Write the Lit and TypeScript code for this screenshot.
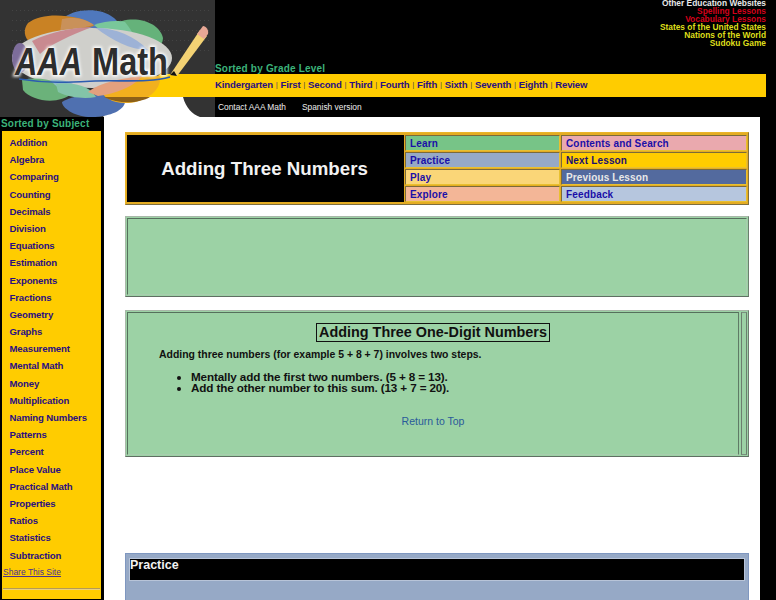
import { LitElement, html, css, svg } from "lit";
import { customElement } from "lit/decorators.js";

const subjects = ["Addition","Algebra","Comparing","Counting","Decimals","Division","Equations","Estimation","Exponents","Fractions","Geometry","Graphs","Measurement","Mental Math","Money","Multiplication","Naming Numbers","Patterns","Percent","Place Value","Practical Math","Properties","Ratios","Statistics","Subtraction"];
const grades = ["Kindergarten","First","Second","Third","Fourth","Fifth","Sixth","Seventh","Eighth","Review"];

const logo = svg`
<svg class="logo" width="215" height="117" viewBox="0 0 215 117" xmlns="http://www.w3.org/2000/svg">
  <defs>
    <filter id="b1" x="-20%" y="-30%" width="140%" height="160%"><feGaussianBlur stdDeviation="1.6"/></filter>
    <pattern id="dots" width="4" height="10" patternUnits="userSpaceOnUse"><rect width="1" height="1" fill="#444"/></pattern>
  </defs>
  <rect width="215" height="117" fill="#333"/>
  <rect x="12" y="8" width="200" height="50" fill="url(#dots)"/>
  <path d="M103 117 C112 106 125 98 145 97 L183 97 C186 108 192 114 200 117 Z" fill="#fff"/>
  <path d="M160 74 H215 V97 H135 Z" fill="#fc0"/>
  <path d="M62 19 C72 9 100 6 114 18 C122 24 122 40 100 46 C80 48 62 36 62 19 Z" fill="#4f78bd"/>
  <path d="M122 21 C140 16 160 24 163 38 C163 52 140 56 118 48 C105 38 108 26 122 21 Z" fill="#65b27a"/>
  <path d="M28 23 C40 14 60 14 78 18 C88 21 93 24 94 26 C75 30 50 36 30 42 C24 38 23 29 28 23 Z" fill="#c98224"/>
  <path d="M62 19 C70 17 84 17 94 25 L60 33 Z" fill="#c9915a"/>
  <path d="M94 25 C104 21 118 20 125 22 C130 28 132 32 134 36 L100 30 Z" fill="#79c79a"/>
  <ellipse cx="92" cy="58" rx="80" ry="30" fill="#cfcfcb"/>
  <path d="M32 41 C50 32 70 28 92 27 C70 36 50 44 40 54 Z" fill="#c98a90"/>
  <path d="M96 28 C115 28 135 36 148 50 C130 50 112 40 96 28 Z" fill="#9db2d6"/>
  <ellipse cx="20" cy="58" rx="8" ry="15" fill="#7d6d9a"/>
  <path d="M22 80 C40 76 60 80 72 93 C60 105 32 102 23 90 Z" fill="#6bb27a"/>
  <path d="M50 80 C70 78 86 90 94 99 C80 98 62 94 50 80 Z" fill="#8fb8c9"/>
  <path d="M62 102 C78 92 110 92 125 102 C124 112 104 118 88 117 C74 116 62 108 62 102 Z" fill="#4f70b0"/>
  <path d="M56 84 C80 82 90 88 96 97 C85 99 70 98 58 92 Z" fill="#83c4a8"/>
  <path d="M100 90 C116 80 140 76 160 76 C162 90 146 102 128 103 C114 104 104 98 100 90 Z" fill="#f2b01e"/>
  <path d="M88 92 C100 82 125 78 142 76 C135 86 115 94 98 96 Z" fill="#e3a07e"/>
  <path d="M104 97 H150 C140 103 120 105 104 97 Z" fill="#8c6018"/>
  <path d="M170 75 L200 30 L207 36 L177 76 Z" fill="#f3d274"/>
  <path d="M197 34 L203 26 C206 26 209 30 208 34 L204 39 Z" fill="#e8a795"/>
  <path d="M170 75 L174 71 L177 76 Z" fill="#111"/>
  <g font-family="'Liberation Sans', Arial, sans-serif" font-weight="700" font-size="39">
    <text x="15" y="75" fill="#fff" stroke="#fff" stroke-width="3" filter="url(#b1)" font-style="italic" textLength="67" lengthAdjust="spacingAndGlyphs">AAA</text>
    <text x="92" y="75" fill="#fff" stroke="#fff" stroke-width="3" filter="url(#b1)" textLength="76" lengthAdjust="spacingAndGlyphs">Math</text>
    <text x="15" y="75" fill="#2d2d2d" font-style="italic" textLength="67" lengthAdjust="spacingAndGlyphs">AAA</text>
    <text x="92" y="75" fill="#2d2d2d" textLength="76" lengthAdjust="spacingAndGlyphs">Math</text>
  </g>
  <path d="M19 79 C50 84 75 82 95 81 C120 80 150 83 170 77" fill="none" stroke="#2b5cb0" stroke-width="1.6"/>
</svg>`;

@customElement("app-root")
export class AppRoot extends LitElement {
  static styles = css`
    :host { display: block; background: #000; width: 776px; height: 600px; overflow: hidden;
      font-family: "Liberation Sans", Arial, sans-serif; }
    a { text-decoration: none; color: inherit; }
    .header { display: flex; height: 117px; }
    .logo { display: block; flex: none; }
    .head-right { width: 551px; display: flex; flex-direction: column; }
    .others { height: 61px; box-sizing: border-box; text-align: right; font-size: 8.4px; font-weight: 700; line-height: 8px; color: #c8c800; }
    .others .w { color: #e8e8e8; line-height: 7px; } .others .r { color: #d4001a; } .others .y { color: #dede1a; }
    .grade-label { height: 13px; line-height: 15px; font-size: 10px; font-weight: 700; color: #3cb37a; letter-spacing: .2px; }
    .grade-bar { height: 23px; box-sizing: border-box; padding-bottom: 3px; background: #fc0; display: flex; align-items: center; font-size: 9.6px; letter-spacing: -.15px; font-weight: 700; color: #2a0f80; white-space: nowrap; }
    .grade-bar i { font-style: normal; font-weight: 400; color: #5a4a50; padding: 0 2.8px; font-size: 8px; }
    .contact { display: flex; gap: 16px; padding: 5px 0 0 3px; font-size: 8.4px; color: #eee; }
    .body { display: flex; height: 483px; }
    .side { width: 104px; flex: none; }
    .side-label { height: 13px; line-height: 13px; padding-left: 1px; font-size: 10px; font-weight: 700; color: #3cb37a; letter-spacing: .2px; white-space: nowrap; }
    .side-box { margin-left: 1px; width: 101px; height: 470px; background: #fc0; border: 1px solid #000; box-sizing: border-box; padding-top: 3px; }
    .side-box a.s { display: block; height: 17.2px; line-height: 17.2px; padding-left: 7.5px; font-size: 9.6px; letter-spacing: -.15px; font-weight: 700; color: #2a0f80; }
    .share { display: block; margin: 3px 0 0 1px; font-size: 8.5px; color: #4a2f90; text-decoration: underline; }
    .side-box hr { margin: 11px 0 0 1px; width: 97px; border: 0; border-top: 1px solid #b59a55; border-bottom: 1px solid #eed27a; }
    .main { width: 656px; background: #fff; padding: 15px 0 0 21px; box-sizing: border-box; }
    .title-table { width: 624px; height: 73px; box-sizing: border-box; background: #e4ac22; border: 1px solid; border-color: #e9b42a #7f6f3f #7f6f3f #e9b42a; padding: 2px 1px; display: grid; grid-template-columns: 277px 155px 186px; gap: 1px 1px; grid-template-rows: repeat(4, 1fr); }
    .title-cell { grid-row: 1 / span 4; background: #000; color: #f2f2f2; font-size: 18.7px; font-weight: 700; display: flex; align-items: center; justify-content: center; padding: 0 2px 0 0; box-sizing: border-box; }
    .nav { border: 1px solid; border-color: #7a6a3a #e8c030 #e8c030 #7a6a3a; font-size: 10px; font-weight: 700; color: #1a0fa8; padding: 0 0 0 4px; display: flex; align-items: center; letter-spacing: .15px; }
    .learn { background: #77c487; } .practice { background: #96a9c6; } .play { background: #fad678; } .explore { background: #f3b697; }
    .contents { background: #eaa9ae; } .next { background: #fc0; color: #1a0f70; } .prev { background: #536a9e; color: #e8e8e8; } .feedback { background: #b6c6de; }
    .green { width: 624px; box-sizing: border-box; background: #9cd2a5; border: 1px solid; border-color: #a8b8a8 #6b7f6e #5f6f62 #a8b8a8; padding: 1px; }
    .ad { height: 81px; margin-top: 11px; }
    .ad > div { height: 100%; box-sizing: border-box; border: 1px solid; border-color: #56705c #a8cdae #a8cdae #56705c; }
    .lesson { height: 147px; margin-top: 13px; display: flex; }
    .lesson-main { width: 612px; flex: none; box-sizing: border-box; border: 1px solid; border-color: #56705c #5f7a66 #a8cdae #56705c; text-align: center; padding-top: 10px; color: #111; }
    .lesson-side { flex: 1; margin-left: 2px; border: 1px solid; border-color: #7a8f7e #6b7f6e; }
    .lesson-title { display: inline-block; border: 1px solid #111; font-size: 14.4px; font-weight: 700; line-height: 17px; padding: 0 2px; }
    .lesson p { margin: 6px 0 0 31px; text-align: left; font-size: 10.45px; font-weight: 700; line-height: 13px; }
    .lesson ul { margin: 10px 0 0 31px; padding: 0 0 0 32px; text-align: left; font-size: 11.7px; letter-spacing: -.13px; font-weight: 700; line-height: 11px; }
    .top { display: block; margin-top: 22px; font-size: 10.5px; color: #2a5a9a; }
    .practice-box { width: 624px; height: 60px; margin-top: 96px; box-sizing: border-box; background: #96a9c6; border: 1px solid #7f97c0; padding: 4px 3px; }
    .practice-title { height: 23px; box-sizing: border-box; background: #000; color: #f2f2f2; border: 1px solid #b8c4d8; font-size: 12.5px; font-weight: 700; line-height: 12px; }
  `;

  render() {
    return html`
      <div class="header">
        ${logo}
        <div class="head-right">
          <div class="others">
            <div class="w">Other Education Websites</div>
            <div class="r">Spelling Lessons</div>
            <div class="r">Vocabulary Lessons</div>
            <div class="y">States of the United States</div>
            <div class="y">Nations of the World</div>
            <div class="y">Sudoku Game</div>
          </div>
          <div class="grade-label">Sorted by Grade Level</div>
          <div class="grade-bar">
            ${grades.map((g, i) => html`${i ? html`<i>|</i>` : ""}<a href="#">${g}</a>`)}
          </div>
          <div class="contact"><a href="#">Contact AAA Math</a><a href="#">Spanish version</a></div>
        </div>
      </div>
      <div class="body">
        <div class="side">
          <div class="side-label">Sorted by Subject</div>
          <div class="side-box">
            ${subjects.map((s) => html`<a class="s" href="#">${s}</a>`)}
            <a class="share" href="#">Share This Site</a>
            <hr />
          </div>
        </div>
        <div class="main">
          <div class="title-table">
            <div class="title-cell">Adding Three Numbers</div>
            <a class="nav learn" href="#">Learn</a><a class="nav contents" href="#">Contents and Search</a>
            <a class="nav practice" href="#">Practice</a><a class="nav next" href="#">Next Lesson</a>
            <a class="nav play" href="#">Play</a><a class="nav prev" href="#">Previous Lesson</a>
            <a class="nav explore" href="#">Explore</a><a class="nav feedback" href="#">Feedback</a>
          </div>
          <div class="green ad"><div></div></div>
          <div class="green lesson">
            <div class="lesson-main">
              <div class="lesson-title">Adding Three One-Digit Numbers</div>
              <p>Adding three numbers (for example 5 + 8 + 7) involves two steps.</p>
              <ul>
                <li>Mentally add the first two numbers. (5 + 8 = 13).</li>
                <li>Add the other number to this sum. (13 + 7 = 20).</li>
              </ul>
              <a class="top" href="#">Return to Top</a>
            </div>
            <div class="lesson-side"></div>
          </div>
          <div class="practice-box"><div class="practice-title">Practice</div></div>
        </div>
      </div>
    `;
  }
}
